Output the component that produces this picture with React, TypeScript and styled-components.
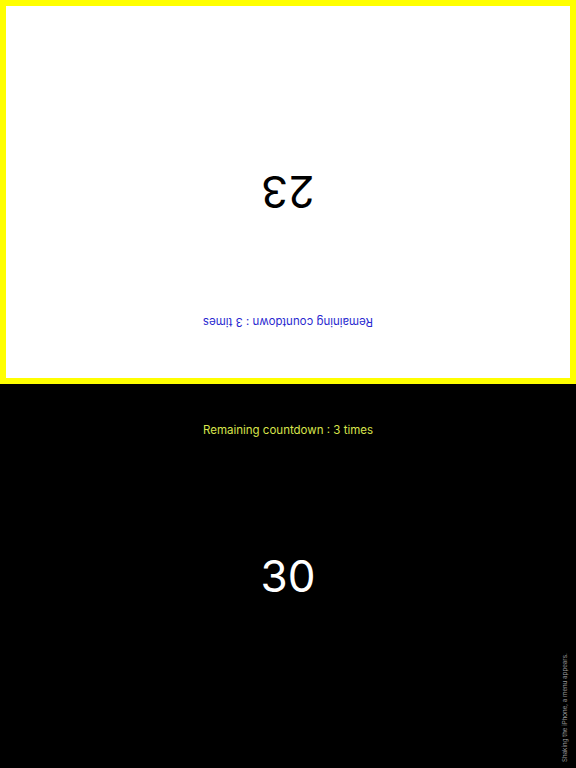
import React from "react";
import styled, { createGlobalStyle } from "styled-components";

const GlobalStyle = createGlobalStyle`
  html, body {
    margin: 0;
    padding: 0;
    background: #000;
  }
  body {
    font-family: Inter, Roboto, "Noto Sans", sans-serif;
  }
`;

const Screen = styled.div`
  width: 576px;
  height: 768px;
  display: flex;
  flex-direction: column;
  overflow: hidden;
`;

const Panel = styled.div<{ $active?: boolean; $flipped?: boolean }>`
  position: relative;
  height: 384px;
  flex: none;
  box-sizing: border-box;
  display: flex;
  flex-direction: column;
  align-items: center;
  background: ${(p) => (p.$active ? "#ffffff" : "#000000")};
  border: ${(p) => (p.$active ? "6px solid #ffff00" : "none")};
  transform: ${(p) => (p.$flipped ? "rotate(180deg)" : "none")};
`;

const Remaining = styled.div<{ $color: string; $top: number }>`
  margin-top: ${(p) => p.$top}px;
  height: 16px;
  line-height: 16px;
  font-size: 11.5px;
  color: ${(p) => p.$color};
`;

const Count = styled.div<{ $color: string }>`
  position: absolute;
  top: 50%;
  left: 50%;
  transform: translate(-50%, -50%);
  font-size: 44px;
  line-height: 1;
  color: ${(p) => p.$color};
`;

const HintWrap = styled.div`
  position: absolute;
  right: 7px;
  bottom: 6px;
  width: 8px;
  height: 110px;
`;

const Hint = styled.div`
  position: absolute;
  right: 0;
  bottom: 0;
  transform-origin: right bottom;
  transform: rotate(-90deg) translateX(100%);
  white-space: nowrap;
  font-size: 6.2px;
  line-height: 8px;
  color: #9a9a9a;
`;

export default function App() {
  return (
    <>
      <GlobalStyle />
      <Screen>
        <Panel $active $flipped>
          <Remaining $color="#2a2ad0" $top={48}>
            Remaining countdown : 3 times
          </Remaining>
          <Count $color="#000000">23</Count>
        </Panel>
        <Panel>
          <Remaining $color="#d8e44c" $top={38}>
            Remaining countdown : 3 times
          </Remaining>
          <Count $color="#ffffff">30</Count>
          <HintWrap>
            <Hint>Shaking the iPhone, a menu appears.</Hint>
          </HintWrap>
        </Panel>
      </Screen>
    </>
  );
}
